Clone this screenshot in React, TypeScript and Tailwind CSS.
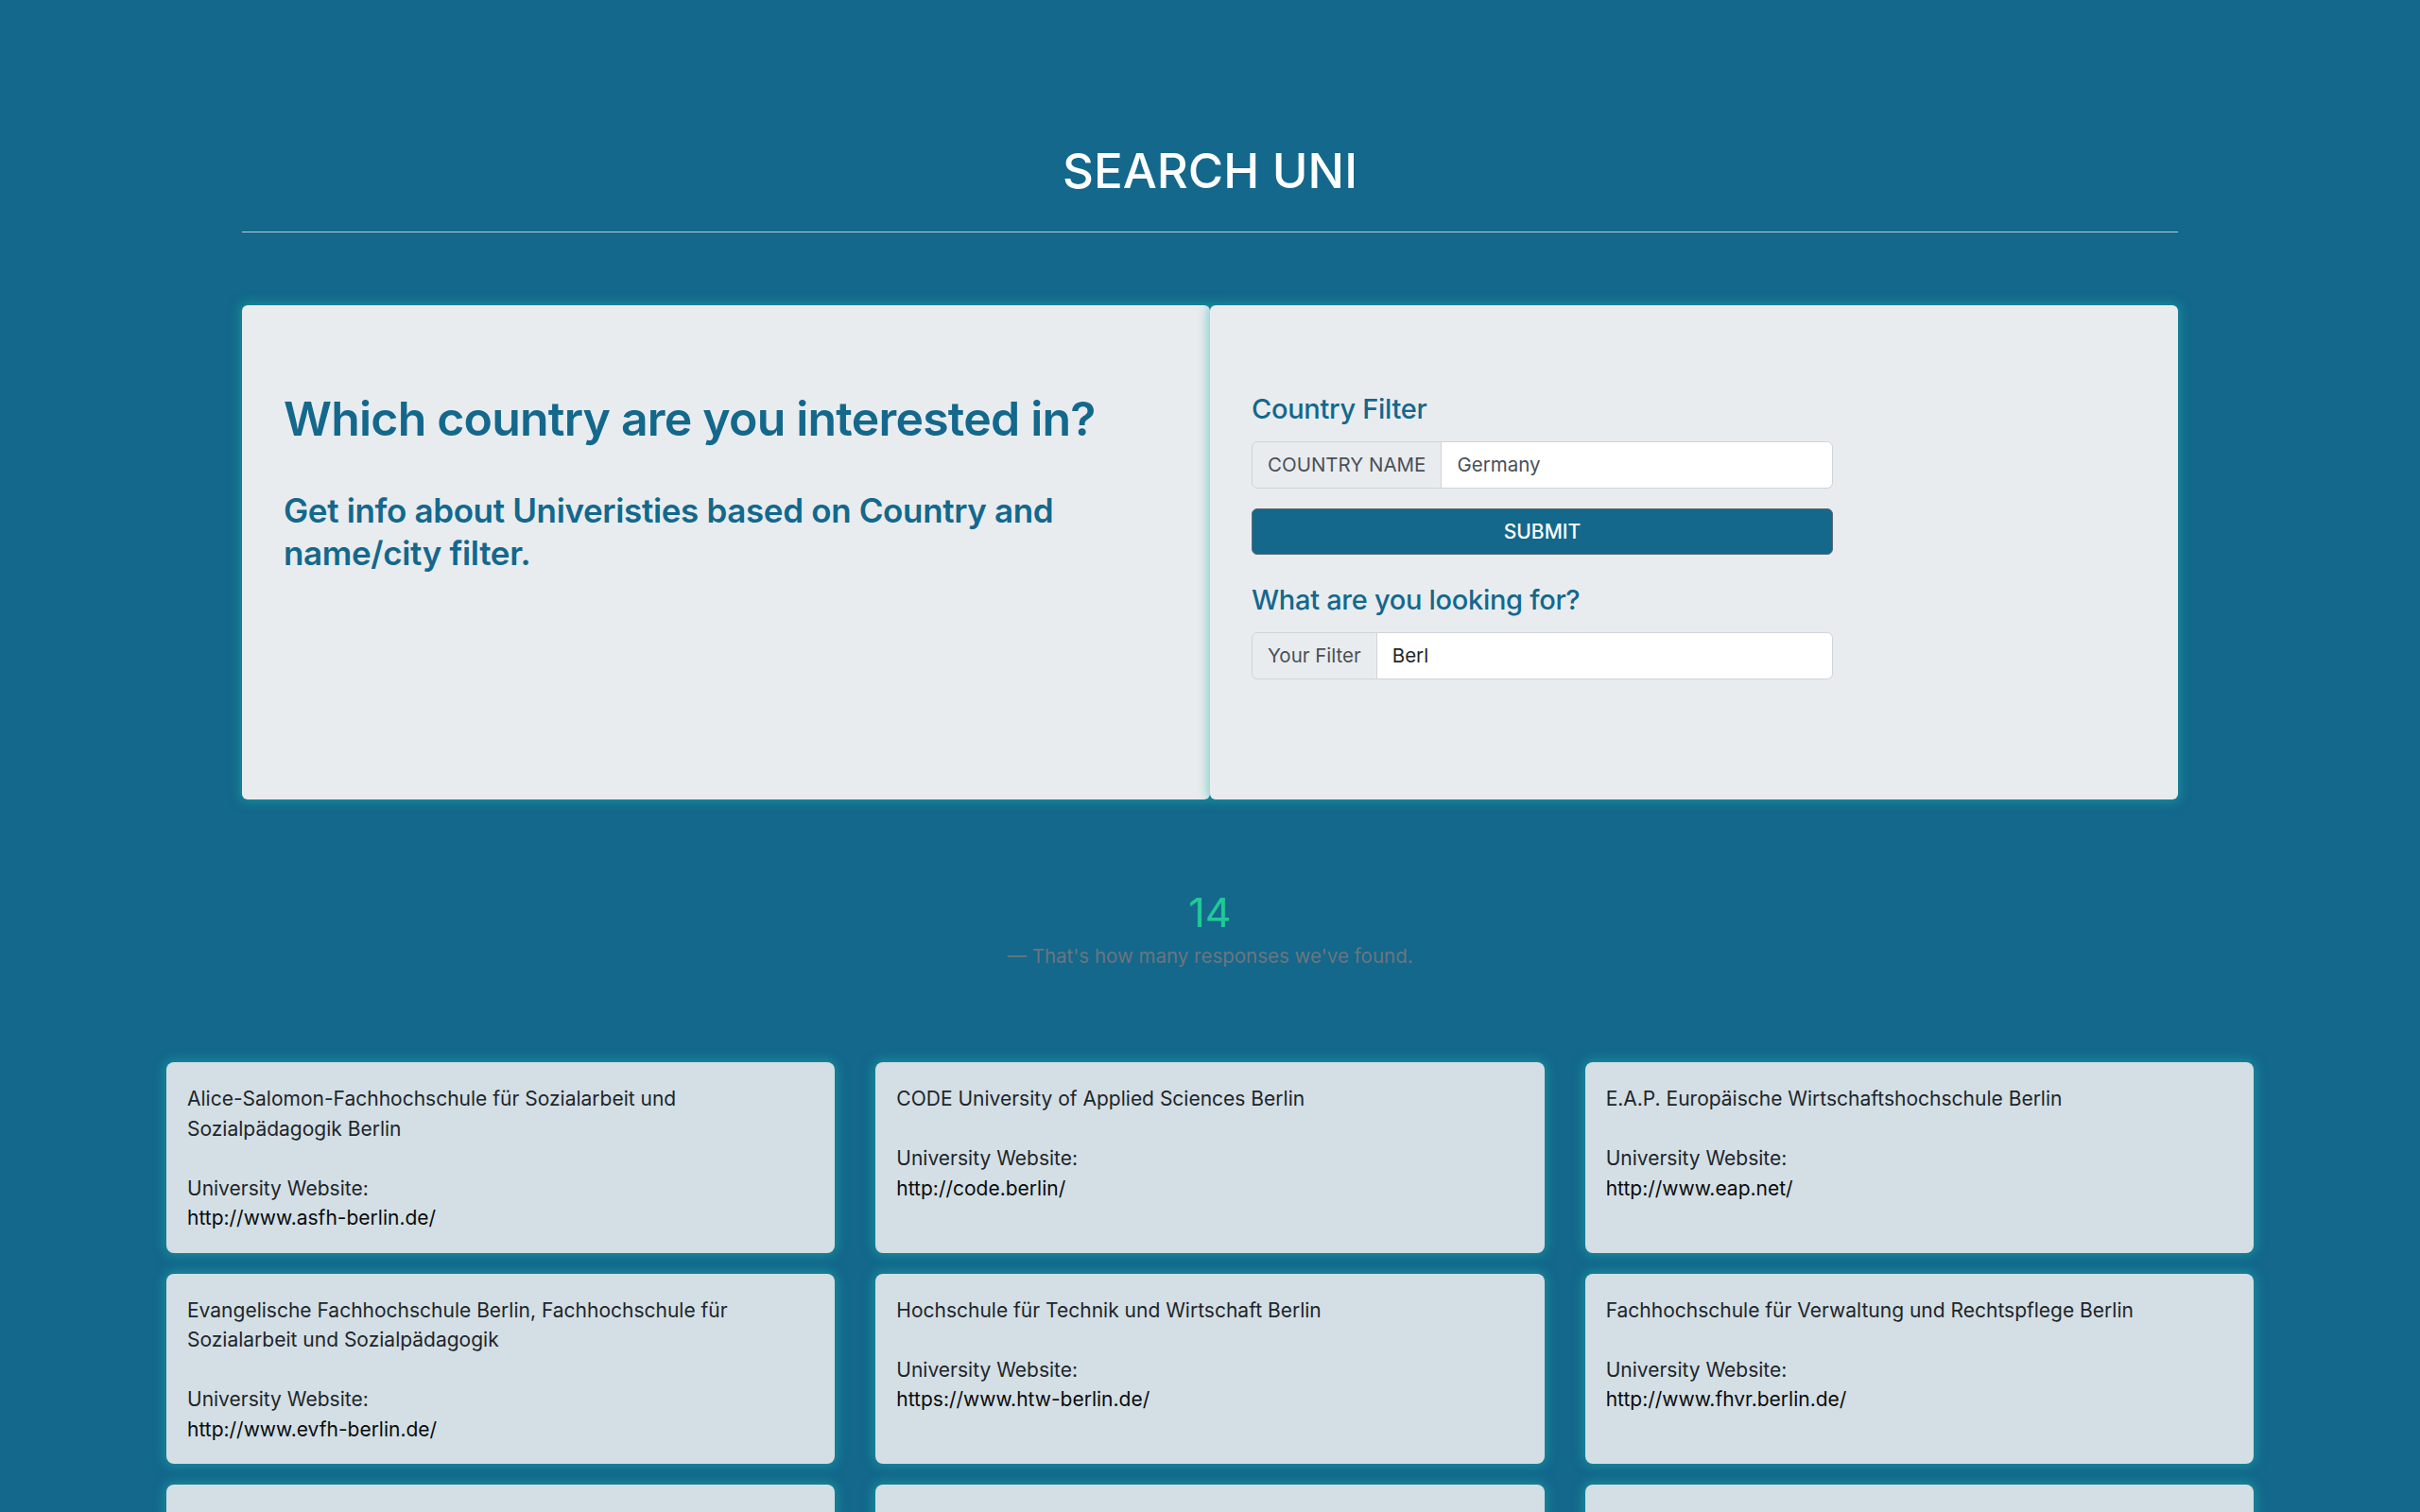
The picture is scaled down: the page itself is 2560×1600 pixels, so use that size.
const universities = [
  { name: "Alice-Salomon-Fachhochschule für Sozialarbeit und Sozialpädagogik Berlin", url: "http://www.asfh-berlin.de/" },
  { name: "CODE University of Applied Sciences Berlin", url: "http://code.berlin/" },
  { name: "E.A.P. Europäische Wirtschaftshochschule Berlin", url: "http://www.eap.net/" },
  { name: "Evangelische Fachhochschule Berlin, Fachhochschule für Sozialarbeit und Sozialpädagogik", url: "http://www.evfh-berlin.de/" },
  { name: "Hochschule für Technik und Wirtschaft Berlin", url: "https://www.htw-berlin.de/" },
  { name: "Fachhochschule für Verwaltung und Rechtspflege Berlin", url: "http://www.fhvr.berlin.de/" },
  { name: "Freie Universität Berlin", url: "http://www.fu-berlin.de/" },
  { name: "Humboldt Universität Berlin", url: "http://www.hu-berlin.de/" },
  { name: "Technische Universität Berlin", url: "http://www.tu-berlin.de/" },
  { name: "Universität der Künste Berlin", url: "http://www.udk-berlin.de/" },
  { name: "Hochschule für Wirtschaft und Recht Berlin", url: "http://www.hwr-berlin.de/" },
  { name: "Beuth Hochschule für Technik Berlin", url: "http://www.beuth-hochschule.de/" },
  { name: "Katholische Hochschule für Sozialwesen Berlin", url: "http://www.khsb-berlin.de/" },
  { name: "Hochschule für Musik Hanns Eisler Berlin", url: "http://www.hfm-berlin.de/" },
];

export default function App() {
  return (
    <div className="min-h-screen w-full bg-[#13688c] font-[Inter,'Noto_Sans',sans-serif] pt-[150px] pb-[60px]">
      {/* Header + search */}
      <div className="w-[2048px] mx-auto">
        <h1 className="text-center text-white text-[51px] leading-[62px] font-medium">SEARCH UNI</h1>
        <div className="mt-[33px] h-px bg-[#b9cdd7]" />

        <div className="mt-[77px] flex h-[523px]">
          <div className="w-1/2 bg-[#e9ecef] rounded-md shadow-[0_0_12px_2px_rgba(32,178,170,0.55)] pt-[89px] px-[44px]">
            <h2 className="text-[#13688c] text-[50px] leading-[62px] font-semibold tracking-[-0.016em]">
              Which country are you interested in?
            </h2>
            <p className="mt-[44px] max-w-[880px] text-[#13688c] text-[35px] leading-[45px] font-semibold tracking-[-0.01em]">
              Get info about Univeristies based on Country and name/city filter.
            </p>
          </div>

          <div className="w-1/2 bg-[#e9ecef] rounded-md shadow-[0_0_12px_2px_rgba(32,178,170,0.55)] pt-[92px] px-[44px]">
            <div className="w-[615px]">
              <h3 className="text-[#13688c] text-[29px] leading-[36px] font-medium tracking-[-0.01em]">Country Filter</h3>
              <div className="mt-[16px] flex h-[50px] text-[20.5px] text-[#495057]">
                <span className="flex items-center px-[16px] bg-[#e9ecef] border border-[#ced4da] rounded-l-md">COUNTRY NAME</span>
                <input
                  readOnly
                  value="Germany"
                  className="flex-1 min-w-0 px-[16px] bg-white border border-l-0 border-[#ced4da] rounded-r-md outline-none text-[#495057]"
                />
              </div>
              <button className="mt-[21px] w-full h-[49px] rounded-md bg-[#13688c] border border-[#5a6a75] text-white text-[21px] font-medium">
                SUBMIT
              </button>
              <h3 className="mt-[30px] text-[#13688c] text-[29px] leading-[36px] font-medium tracking-[-0.01em]">What are you looking for?</h3>
              <div className="mt-[16px] flex h-[50px] text-[20.5px] text-[#495057]">
                <span className="flex items-center px-[16px] bg-[#e9ecef] border border-[#ced4da] rounded-l-md">Your Filter</span>
                <input
                  readOnly
                  value="Berl"
                  className="flex-1 min-w-0 px-[16px] bg-white border border-l-0 border-[#ced4da] rounded-r-md outline-none text-[#212529]"
                />
              </div>
            </div>
          </div>
        </div>
      </div>

      {/* Result count */}
      <div className="mt-[93px] text-center">
        <div className="text-[#20c997] text-[43px] leading-[52px]">14</div>
        <div className="mt-[4px] text-[#6c757d] text-[20.5px] leading-[33px]">— That's how many responses we've found.</div>
      </div>

      {/* Results */}
      <div className="mt-[96px] w-[2208px] mx-auto grid grid-cols-3 gap-x-[43px] gap-y-[22px]">
        {universities.map((u) => (
          <div
            key={u.name}
            className="bg-[#d3dfe5] rounded-lg px-[22px] pt-[23px] pb-[21px] text-[21px] leading-[31.5px] text-[#212529] shadow-[0_0_12px_2px_rgba(32,178,170,0.55)]"
          >
            <div>{u.name}</div>
            <div className="h-[31.5px]" />
            <div>University Website:</div>
            <div className="text-[#0b0b0b]">{u.url}</div>
          </div>
        ))}
      </div>
    </div>
  );
}
